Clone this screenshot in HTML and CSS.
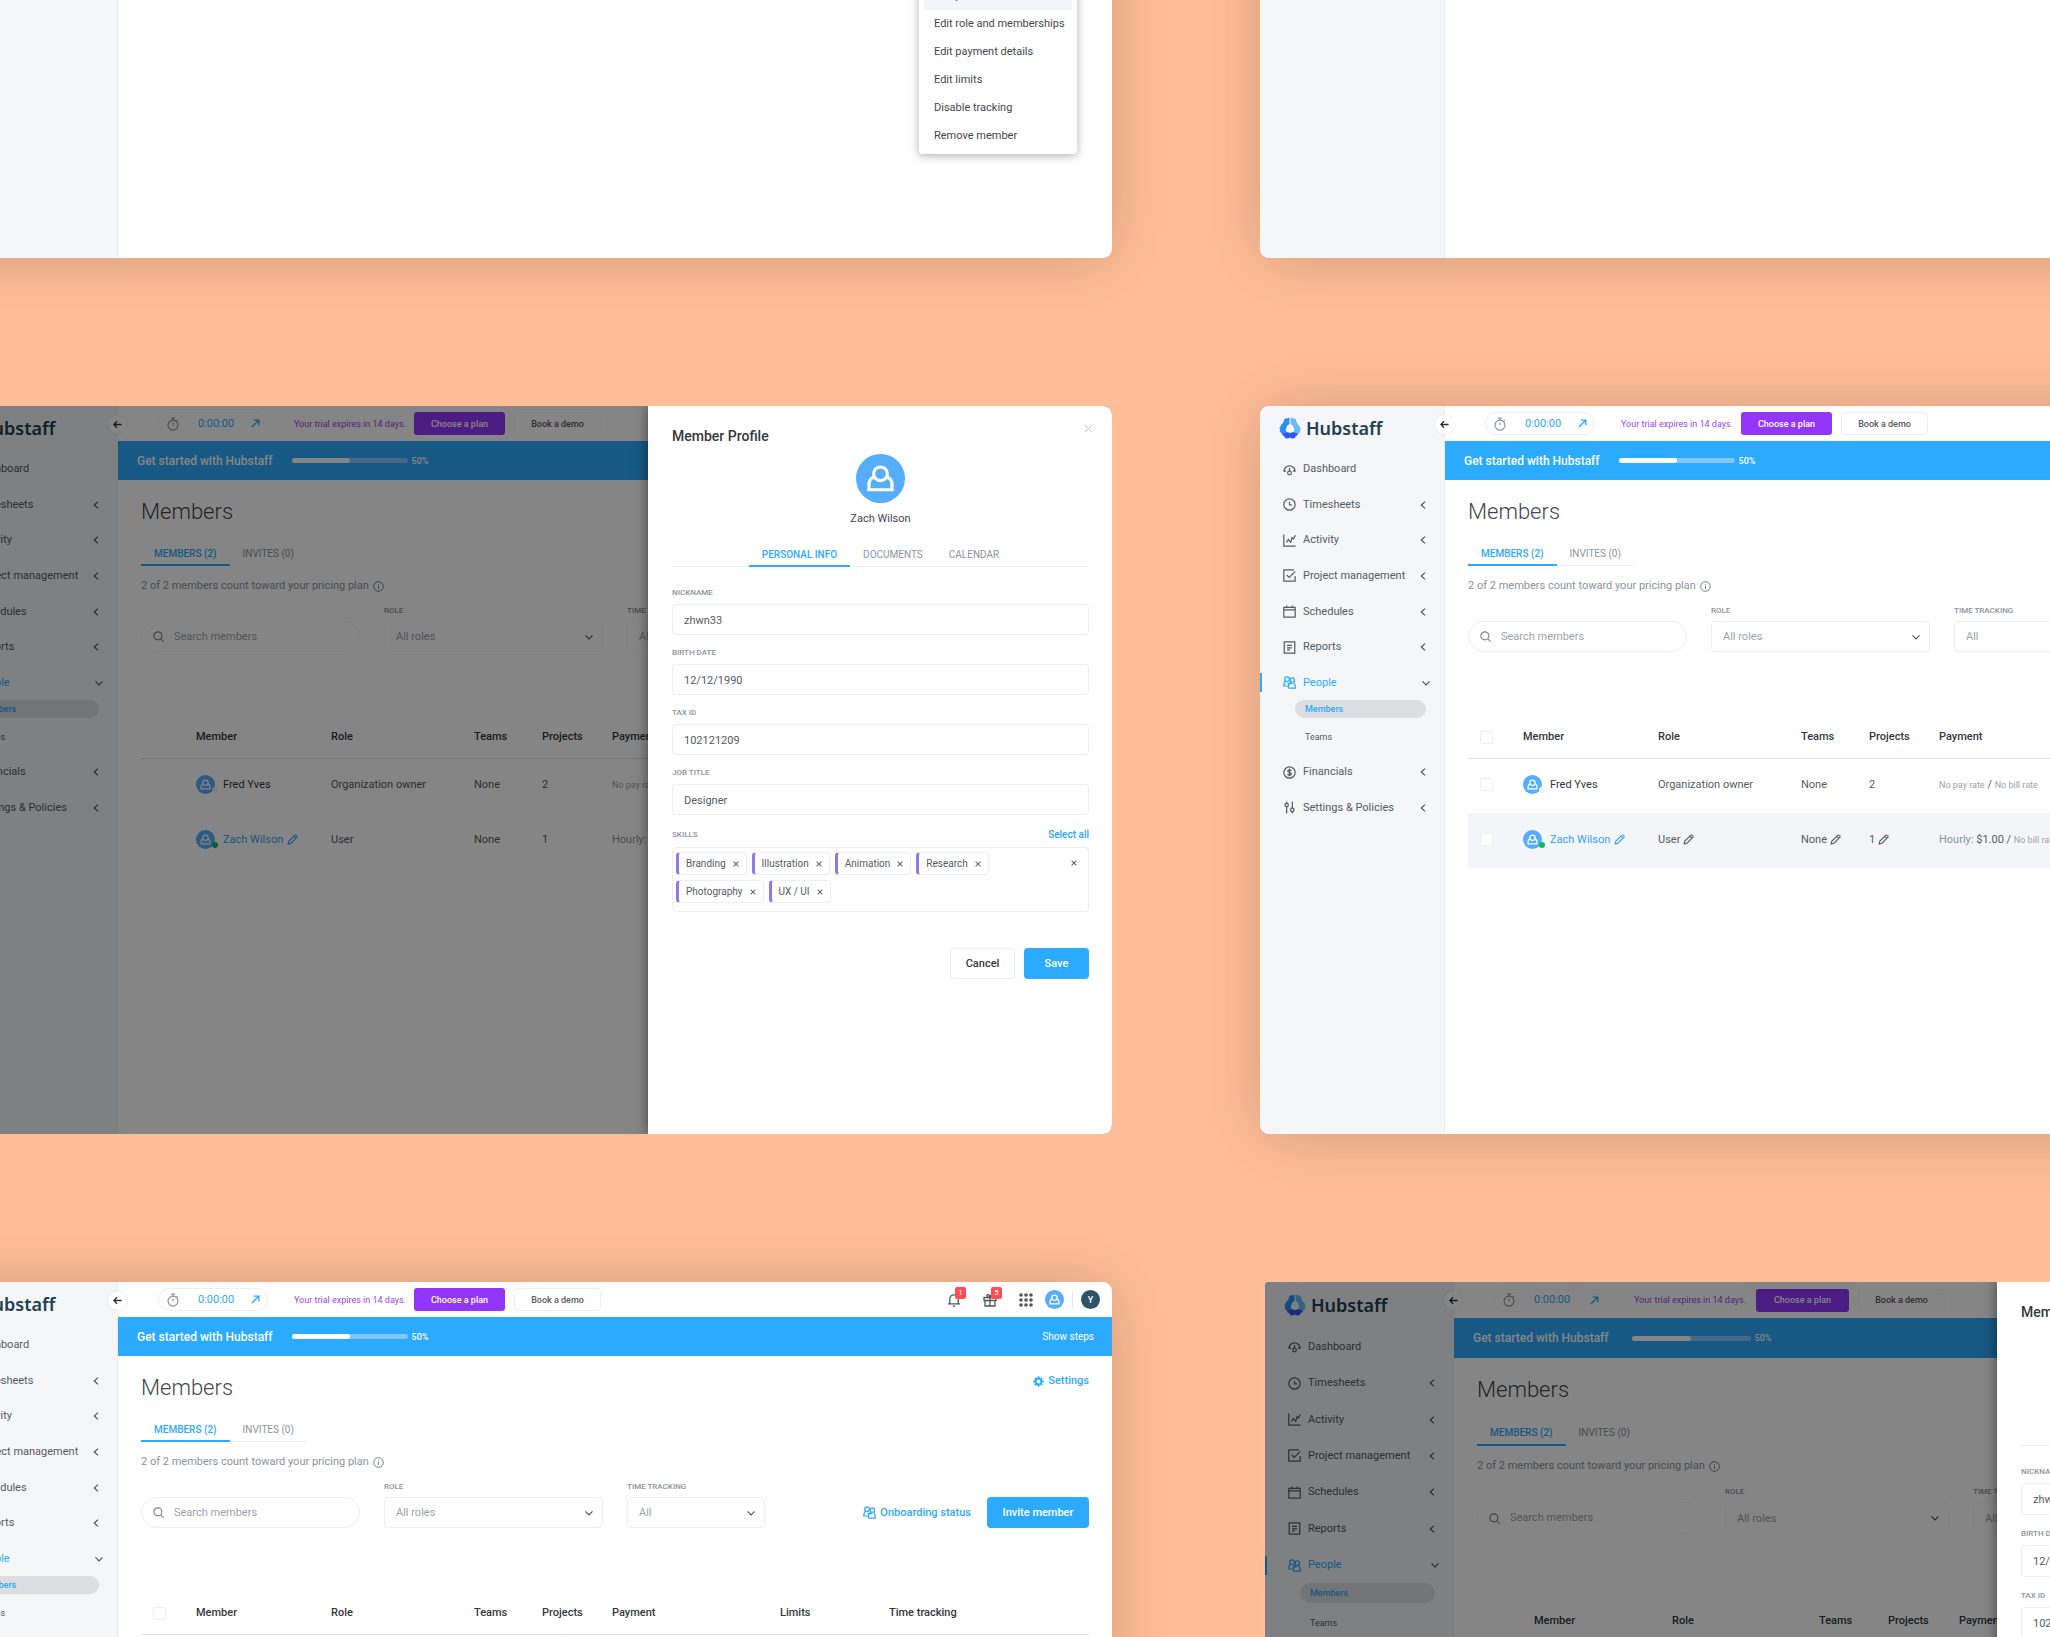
FILE: index.html
```html
<!DOCTYPE html>
<html lang="en">
<head>
<meta charset="utf-8">
<title>Hubstaff – Members</title>
<link rel="stylesheet" href="styles.css">
</head>
<body>
<svg class="sprite" aria-hidden="true">
  <symbol id="logo" viewBox="0 0 22 22">
    <path fill="#2a8cf8" d="M10.400 .6 7.400 1.700 6.900 1 4.600 3.200 5.200 4 3.400 6.800 2.600 7 1 10.200 .2 11.800 1.200 12.300 .7 14.600 3 17 7.500 15 6.800 12.500 8.200 8.600 10.400 7Z"/>
    <path fill="#62bcff" d="M11.600 .6 14.600 1.700 15.200 1 17.500 3.200 16.900 4.100 18.800 7.200 20.500 9.500 21.800 12.500 20.800 13.200 21.200 14.800 19 17 14.500 15 15.200 12.500 13.800 8.600 11.600 7Z"/>
    <path fill="#2f55f4" d="M3 16.800 7.600 14.900 11 15.900 14.400 14.900 19.100 16.800 18 18.800 17.200 18.600 15.500 21.200 12.800 21.600 11 20.600 9.200 21.600 6.400 21.200 4.900 18.700 4 18.900Z"/>
  </symbol>
  <symbol id="i-dash" viewBox="0 0 16 16"><path d="M1 10.500a7 7 0 1 1 14 0M1 10.500l2.800-.8M15 10.500l-2.800-.8M8 6v4"/><circle cx="8" cy="12.300" r="2.300"/></symbol>
  <symbol id="i-clock" viewBox="0 0 16 16"><circle cx="8" cy="8" r="7"/><path d="M8 4.500V8.500h3"/></symbol>
  <symbol id="i-chart" viewBox="0 0 16 16"><path d="M1 .5V15h14.500M4.300 10.500l2.200-3.600 3 3.300L11.200 4.500l1.600 1.600L15.300 1.500"/></symbol>
  <symbol id="i-check" viewBox="0 0 16 16"><path d="M15 8.500V15H1V1h12.500M4.500 7.200l3.200 3.200L15 3"/></symbol>
  <symbol id="i-cal" viewBox="0 0 16 16"><path d="M1 2.800h14V15H1zM1 6h14M4.500 .5v3M11.500 .5v3"/></symbol>
  <symbol id="i-report" viewBox="0 0 16 16"><path d="M1.500 1h13v14h-13zM5 5.500h6M5 8.500h6M5 11h3.500"/></symbol>
  <symbol id="i-people" viewBox="0 0 16 16"><circle cx="5" cy="4" r="2.900"/><circle cx="11.500" cy="5" r="2.700"/><path d="M3 6.500C1.300 7.500 1 9.500 1 12.300h5M6.500 14.800h8.700c0-4-.8-6-2.400-7.200M9.800 7.500c-2.300 1.200-3.300 3.500-3.300 7.300M5.500 9.300h5.800"/></symbol>
  <symbol id="i-dollar" viewBox="0 0 16 16"><circle cx="8" cy="8" r="7"/><path d="M10.300 6C10 5 9 4.800 8 4.800c-1.300 0-2.200.6-2.200 1.500C5.800 8.500 10.300 7.300 10.300 9.700c0 1-1 1.600-2.300 1.600-1.200 0-2.100-.5-2.400-1.400M8 3.300v9.400"/></symbol>
  <symbol id="i-sliders" viewBox="0 0 16 16"><path d="M4.500 7v8.500M4.500 .5v2.300M11.500 .5v8.300M11.500 13.200v2.300"/><circle cx="4.500" cy="5" r="2.100"/><circle cx="11.500" cy="11" r="2.100"/></symbol>
  <symbol id="i-left" viewBox="0 0 8 8"><path d="M6 .6 2.300 4l3.700 3.400"/></symbol>
  <symbol id="i-down" viewBox="0 0 8 8"><path d="M.5 2.300 4 5.800l3.500-3.500"/></symbol>
  <symbol id="i-back" viewBox="0 0 10 10"><path d="M9.500 5H1M4.500 1.500 1 5l3.500 3.500"/></symbol>
  <symbol id="i-watch" viewBox="0 0 14 16"><circle cx="7" cy="9.300" r="5.800"/><path d="M4.500 1h5M7 1v2.500M7 6.300v3.200M11.400 3.400l1.300 1.200"/></symbol>
  <symbol id="i-open" viewBox="0 0 10 10"><path d="M1 9 8.500 1.500M3 1.300h5.700V7"/></symbol>
  <symbol id="i-info" viewBox="0 0 12 12"><circle cx="6" cy="6" r="5.200"/><path d="M6 5.400v3.200M6 3.200v1"/></symbol>
  <symbol id="i-search" viewBox="0 0 12 12"><circle cx="5.300" cy="5.300" r="4.400"/><path d="M8.500 8.500l3 3"/></symbol>
  <symbol id="i-pencil" viewBox="0 0 12 12"><path d="M1.300 10.800 2 7.800 8.300 1.500a1.200 1.200 0 0 1 1.800 0l.6.600a1.200 1.200 0 0 1 0 1.700L4.300 10.100zM7.500 2.500l2.200 2.200"/></symbol>
  <symbol id="i-user" viewBox="0 0 20 20"><circle cx="10" cy="8.100" r="2.800"/><path d="M7.300 9.400C6 9.900 5.300 11 5.300 12.600v2h9.400v-2c0-1.600-.7-2.700-2-3.200"/></symbol>
  <symbol id="i-x" viewBox="0 0 10 10"><path d="M1 1l8 8M9 1 1 9"/></symbol>
  <symbol id="i-bell" viewBox="0 0 14 14"><path d="M1 10.800h12M2.800 10.500V6a4.200 4.200 0 0 1 8.400 0v4.500M5.800 13.200h2.400"/></symbol>
  <symbol id="i-gift" viewBox="0 0 14 14"><path d="M1 4.500h12v3H1zM2 7.500V13h10V7.500M7 4.500V13M7 4.300C5 4.300 3.500 3.500 4 2.200 4.700.8 6.700 2 7 4.300 7.300 2 9.300.8 10 2.200c.5 1.300-1 2.100-3 2.100"/></symbol>
  <symbol id="i-grid" viewBox="0 0 14 14"><g fill="currentColor" stroke="none"><circle cx="2" cy="2" r="1.800"/><circle cx="7" cy="2" r="1.800"/><circle cx="12" cy="2" r="1.800"/><circle cx="2" cy="7" r="1.800"/><circle cx="7" cy="7" r="1.800"/><circle cx="12" cy="7" r="1.800"/><circle cx="2" cy="12" r="1.800"/><circle cx="7" cy="12" r="1.800"/><circle cx="12" cy="12" r="1.800"/></g></symbol>
  <symbol id="i-gear" viewBox="0 0 12 12"><circle cx="6" cy="6" r="3.200" stroke-width="2.200"/><path stroke-width="2" d="M6 .3v2M6 9.700v2M.3 6h2M9.700 6h2M2 2l1.200 1.200M8.800 8.800 10 10M2 10l1.200-1.200M8.800 3.200 10 2"/></symbol>
</svg>

<div class="board">

  <!-- Row menu open -->
  <section class="window">
    <aside class="sidebar"></aside>
    <div class="main"></div>
    <menu class="menu">
      <li><button class="menu-item is-active">Edit profile</button></li>
      <li><button class="menu-item">Edit role and memberships</button></li>
      <li><button class="menu-item">Edit payment details</button></li>
      <li><button class="menu-item">Edit limits</button></li>
      <li><button class="menu-item">Disable tracking</button></li>
      <li><button class="menu-item">Remove member</button></li>
    </menu>
  </section>

  <section class="window">
    <aside class="sidebar"></aside>
    <div class="main"></div>
  </section>

  <!-- Member profile drawer -->
  <section class="window window-modal">
    <aside class="sidebar">
      <a class="brand" href="#"><svg class="logo"><use href="#logo"/></svg>Hubstaff</a>
      <nav>
        <div class="nav-group nav-main">
          <a class="nav-item" href="#"><svg class="icon"><use href="#i-dash"/></svg>Dashboard</a>
          <a class="nav-item" href="#"><svg class="icon"><use href="#i-clock"/></svg>Timesheets<svg class="caret"><use href="#i-left"/></svg></a>
          <a class="nav-item" href="#"><svg class="icon"><use href="#i-chart"/></svg>Activity<svg class="caret"><use href="#i-left"/></svg></a>
          <a class="nav-item" href="#"><svg class="icon"><use href="#i-check"/></svg>Project management<svg class="caret"><use href="#i-left"/></svg></a>
          <a class="nav-item" href="#"><svg class="icon"><use href="#i-cal"/></svg>Schedules<svg class="caret"><use href="#i-left"/></svg></a>
          <a class="nav-item" href="#"><svg class="icon"><use href="#i-report"/></svg>Reports<svg class="caret"><use href="#i-left"/></svg></a>
          <a class="nav-item is-active" href="#"><svg class="icon"><use href="#i-people"/></svg>People<svg class="caret"><use href="#i-down"/></svg></a>
        </div>
        <div class="subnav">
          <a class="sub-item is-active" href="#">Members</a>
          <a class="sub-item" href="#">Teams</a>
        </div>
        <div class="nav-group nav-more">
          <a class="nav-item" href="#"><svg class="icon"><use href="#i-dollar"/></svg>Financials<svg class="caret"><use href="#i-left"/></svg></a>
          <a class="nav-item" href="#"><svg class="icon"><use href="#i-sliders"/></svg>Settings &amp; Policies<svg class="caret"><use href="#i-left"/></svg></a>
        </div>
      </nav>
      <button class="collapse" aria-label="Collapse sidebar"><svg><use href="#i-back"/></svg></button>
    </aside>
    <div class="main">
      <header class="topbar">
        <div class="timer"><svg class="watch"><use href="#i-watch"/></svg><span>0:00:00</span><svg class="open"><use href="#i-open"/></svg></div>
        <span class="trial">Your trial expires in 14 days.</span>
        <button class="btn btn-plan">Choose a plan</button>
        <button class="btn btn-demo">Book a demo</button>
      </header>
      <div class="banner"><strong>Get started with Hubstaff</strong><span class="progress"><i style="width:50%"></i></span><span class="percent">50%</span></div>
      <div class="content">
        <h1>Members</h1>
        <div class="tabs"><a class="tab is-active" href="#">MEMBERS (2)</a><a class="tab" href="#">INVITES (0)</a></div>
        <p class="count">2 of 2 members count toward your pricing plan <svg class="info"><use href="#i-info"/></svg></p>
        <div class="filters">
          <div class="search"><svg><use href="#i-search"/></svg><input type="search" placeholder="Search members" aria-label="Search members"></div>
          <div class="filter"><label for="role-a">ROLE</label><div class="picker"><select id="role-a"><option>All roles</option></select><svg class="caret"><use href="#i-down"/></svg></div></div>
          <div class="filter filter-short"><label for="time-a">TIME TRACKING</label><div class="picker"><select id="time-a"><option>All</option></select><svg class="caret"><use href="#i-down"/></svg></div></div>
        </div>
        <table class="members">
          <colgroup><col class="c-check"><col class="c-member"><col class="c-role"><col class="c-teams"><col class="c-projects"><col class="c-pay"><col class="c-limits"><col></colgroup>
          <thead><tr><th></th><th>Member</th><th>Role</th><th>Teams</th><th>Projects</th><th>Payment</th><th></th><th></th></tr></thead>
          <tbody>
            <tr><td></td><td><div class="person"><span class="avatar"><svg><use href="#i-user"/></svg><i class="dot"></i></span>Fred Yves</div></td><td>Organization owner</td><td>None</td><td>2</td><td><small>No pay rate</small></td><td></td><td></td></tr>
            <tr><td></td><td><div class="person"><span class="avatar"><svg><use href="#i-user"/></svg><i class="dot is-on"></i></span><a href="#">Zach Wilson</a><svg class="pencil is-link"><use href="#i-pencil"/></svg></div></td><td>User</td><td>None</td><td>1</td><td><span class="muted">Hourly:</span></td><td></td><td></td></tr>
          </tbody>
        </table>
      </div>
    </div>
    <div class="shade"></div>
    <form class="drawer">
      <div class="drawer-head"><h2>Member Profile</h2><button type="button" class="close" aria-label="Close"><svg><use href="#i-x"/></svg></button></div>
      <div class="profile"><span class="avatar avatar-big"><svg><use href="#i-user"/></svg></span><span class="profile-name">Zach Wilson</span></div>
      <div class="drawer-tabs"><a class="tab is-active" href="#">PERSONAL INFO</a><a class="tab" href="#">DOCUMENTS</a><a class="tab" href="#">CALENDAR</a></div>
      <div class="field"><label for="nick-a">NICKNAME</label><input id="nick-a" value="zhwn33"></div>
      <div class="field"><label for="birth-a">BIRTH DATE</label><input id="birth-a" value="12/12/1990"></div>
      <div class="field"><label for="tax-a">TAX ID</label><input id="tax-a" value="102121209"></div>
      <div class="field"><label for="job-a">JOB TITLE</label><input id="job-a" value="Designer"></div>
      <div class="skills-head"><span>SKILLS</span><a href="#">Select all</a></div>
      <div class="skills">
        <div class="chips">
          <span class="chip">Branding<button type="button" aria-label="Remove Branding"><svg><use href="#i-x"/></svg></button></span>
          <span class="chip">Illustration<button type="button" aria-label="Remove Illustration"><svg><use href="#i-x"/></svg></button></span>
          <span class="chip">Animation<button type="button" aria-label="Remove Animation"><svg><use href="#i-x"/></svg></button></span>
          <span class="chip">Research<button type="button" aria-label="Remove Research"><svg><use href="#i-x"/></svg></button></span>
          <span class="chip">Photography<button type="button" aria-label="Remove Photography"><svg><use href="#i-x"/></svg></button></span>
          <span class="chip">UX / UI<button type="button" aria-label="Remove UX / UI"><svg><use href="#i-x"/></svg></button></span>
        </div>
        <button type="button" class="clear" aria-label="Clear skills"><svg><use href="#i-x"/></svg></button>
      </div>
      <div class="actions"><button type="button" class="btn btn-cancel">Cancel</button><button type="button" class="btn btn-save">Save</button></div>
    </form>
  </section>

  <!-- Members list with a hovered row -->
  <section class="window">
    <aside class="sidebar">
      <a class="brand" href="#"><svg class="logo"><use href="#logo"/></svg>Hubstaff</a>
      <nav>
        <div class="nav-group nav-main">
          <a class="nav-item" href="#"><svg class="icon"><use href="#i-dash"/></svg>Dashboard</a>
          <a class="nav-item" href="#"><svg class="icon"><use href="#i-clock"/></svg>Timesheets<svg class="caret"><use href="#i-left"/></svg></a>
          <a class="nav-item" href="#"><svg class="icon"><use href="#i-chart"/></svg>Activity<svg class="caret"><use href="#i-left"/></svg></a>
          <a class="nav-item" href="#"><svg class="icon"><use href="#i-check"/></svg>Project management<svg class="caret"><use href="#i-left"/></svg></a>
          <a class="nav-item" href="#"><svg class="icon"><use href="#i-cal"/></svg>Schedules<svg class="caret"><use href="#i-left"/></svg></a>
          <a class="nav-item" href="#"><svg class="icon"><use href="#i-report"/></svg>Reports<svg class="caret"><use href="#i-left"/></svg></a>
          <a class="nav-item is-active" href="#"><svg class="icon"><use href="#i-people"/></svg>People<svg class="caret"><use href="#i-down"/></svg></a>
        </div>
        <div class="subnav">
          <a class="sub-item is-active" href="#">Members</a>
          <a class="sub-item" href="#">Teams</a>
        </div>
        <div class="nav-group nav-more">
          <a class="nav-item" href="#"><svg class="icon"><use href="#i-dollar"/></svg>Financials<svg class="caret"><use href="#i-left"/></svg></a>
          <a class="nav-item" href="#"><svg class="icon"><use href="#i-sliders"/></svg>Settings &amp; Policies<svg class="caret"><use href="#i-left"/></svg></a>
        </div>
      </nav>
      <button class="collapse" aria-label="Collapse sidebar"><svg><use href="#i-back"/></svg></button>
    </aside>
    <div class="main">
      <header class="topbar">
        <div class="timer"><svg class="watch"><use href="#i-watch"/></svg><span>0:00:00</span><svg class="open"><use href="#i-open"/></svg></div>
        <span class="trial">Your trial expires in 14 days.</span>
        <button class="btn btn-plan">Choose a plan</button>
        <button class="btn btn-demo">Book a demo</button>
      </header>
      <div class="banner"><strong>Get started with Hubstaff</strong><span class="progress"><i style="width:50%"></i></span><span class="percent">50%</span></div>
      <div class="content">
        <h1>Members</h1>
        <div class="tabs"><a class="tab is-active" href="#">MEMBERS (2)</a><a class="tab" href="#">INVITES (0)</a></div>
        <p class="count">2 of 2 members count toward your pricing plan <svg class="info"><use href="#i-info"/></svg></p>
        <div class="filters">
          <div class="search"><svg><use href="#i-search"/></svg><input type="search" placeholder="Search members" aria-label="Search members"></div>
          <div class="filter"><label for="role-b">ROLE</label><div class="picker"><select id="role-b"><option>All roles</option></select><svg class="caret"><use href="#i-down"/></svg></div></div>
          <div class="filter filter-short"><label for="time-b">TIME TRACKING</label><div class="picker"><select id="time-b"><option>All</option></select><svg class="caret"><use href="#i-down"/></svg></div></div>
        </div>
        <table class="members">
          <colgroup><col class="c-check"><col class="c-member"><col class="c-role"><col class="c-teams"><col class="c-projects"><col class="c-pay"><col class="c-limits"><col></colgroup>
          <thead><tr><th><input type="checkbox" aria-label="Select all members"></th><th>Member</th><th>Role</th><th>Teams</th><th>Projects</th><th>Payment</th><th></th><th></th></tr></thead>
          <tbody>
            <tr><td><input type="checkbox" aria-label="Select Fred Yves"></td><td><div class="person"><span class="avatar"><svg><use href="#i-user"/></svg><i class="dot"></i></span>Fred Yves</div></td><td>Organization owner</td><td>None</td><td>2</td><td><small>No pay rate</small> / <small>No bill rate</small></td><td></td><td></td></tr>
            <tr class="is-hovered"><td><input type="checkbox" aria-label="Select Zach Wilson"></td><td><div class="person"><span class="avatar"><svg><use href="#i-user"/></svg><i class="dot is-on"></i></span><a href="#">Zach Wilson</a><svg class="pencil is-link"><use href="#i-pencil"/></svg></div></td><td>User <svg class="pencil"><use href="#i-pencil"/></svg></td><td>None <svg class="pencil"><use href="#i-pencil"/></svg></td><td>1 <svg class="pencil"><use href="#i-pencil"/></svg></td><td><span class="muted">Hourly:</span> $1.00 / <small>No bill rate</small></td><td></td><td></td></tr>
          </tbody>
        </table>
      </div>
    </div>
  </section>

  <!-- Members list -->
  <section class="window">
    <aside class="sidebar">
      <a class="brand" href="#"><svg class="logo"><use href="#logo"/></svg>Hubstaff</a>
      <nav>
        <div class="nav-group nav-main">
          <a class="nav-item" href="#"><svg class="icon"><use href="#i-dash"/></svg>Dashboard</a>
          <a class="nav-item" href="#"><svg class="icon"><use href="#i-clock"/></svg>Timesheets<svg class="caret"><use href="#i-left"/></svg></a>
          <a class="nav-item" href="#"><svg class="icon"><use href="#i-chart"/></svg>Activity<svg class="caret"><use href="#i-left"/></svg></a>
          <a class="nav-item" href="#"><svg class="icon"><use href="#i-check"/></svg>Project management<svg class="caret"><use href="#i-left"/></svg></a>
          <a class="nav-item" href="#"><svg class="icon"><use href="#i-cal"/></svg>Schedules<svg class="caret"><use href="#i-left"/></svg></a>
          <a class="nav-item" href="#"><svg class="icon"><use href="#i-report"/></svg>Reports<svg class="caret"><use href="#i-left"/></svg></a>
          <a class="nav-item is-active" href="#"><svg class="icon"><use href="#i-people"/></svg>People<svg class="caret"><use href="#i-down"/></svg></a>
        </div>
        <div class="subnav">
          <a class="sub-item is-active" href="#">Members</a>
          <a class="sub-item" href="#">Teams</a>
        </div>
      </nav>
      <button class="collapse" aria-label="Collapse sidebar"><svg><use href="#i-back"/></svg></button>
    </aside>
    <div class="main">
      <header class="topbar">
        <div class="timer"><svg class="watch"><use href="#i-watch"/></svg><span>0:00:00</span><svg class="open"><use href="#i-open"/></svg></div>
        <span class="trial">Your trial expires in 14 days.</span>
        <button class="btn btn-plan">Choose a plan</button>
        <button class="btn btn-demo">Book a demo</button>
        <div class="tools">
          <button class="tool" aria-label="Notifications"><svg><use href="#i-bell"/></svg><span class="badge">1</span></button>
          <button class="tool" aria-label="What is new"><svg><use href="#i-gift"/></svg><span class="badge">5</span></button>
          <button class="tool" aria-label="Apps"><svg><use href="#i-grid"/></svg></button>
          <span class="avatar"><svg><use href="#i-user"/></svg></span>
          <span class="rule"></span>
          <span class="avatar avatar-org">Y</span>
        </div>
      </header>
      <div class="banner"><strong>Get started with Hubstaff</strong><span class="progress"><i style="width:50%"></i></span><span class="percent">50%</span><a class="steps" href="#">Show steps</a></div>
      <div class="content">
        <div class="title-row"><h1>Members</h1><a class="text-link" href="#"><svg class="gear"><use href="#i-gear"/></svg>Settings</a></div>
        <div class="tabs"><a class="tab is-active" href="#">MEMBERS (2)</a><a class="tab" href="#">INVITES (0)</a></div>
        <p class="count">2 of 2 members count toward your pricing plan <svg class="info"><use href="#i-info"/></svg></p>
        <div class="filters">
          <div class="search"><svg><use href="#i-search"/></svg><input type="search" placeholder="Search members" aria-label="Search members"></div>
          <div class="filter"><label for="role-c">ROLE</label><div class="picker"><select id="role-c"><option>All roles</option></select><svg class="caret"><use href="#i-down"/></svg></div></div>
          <div class="filter filter-short"><label for="time-c">TIME TRACKING</label><div class="picker"><select id="time-c"><option>All</option></select><svg class="caret"><use href="#i-down"/></svg></div></div>
          <div class="filter-actions"><a class="text-link" href="#"><svg class="icon"><use href="#i-people"/></svg>Onboarding status</a><button class="btn btn-invite">Invite member</button></div>
        </div>
        <table class="members">
          <colgroup><col class="c-check"><col class="c-member"><col class="c-role"><col class="c-teams"><col class="c-projects"><col class="c-pay"><col class="c-limits"><col></colgroup>
          <thead><tr><th><input type="checkbox" aria-label="Select all members"></th><th>Member</th><th>Role</th><th>Teams</th><th>Projects</th><th>Payment</th><th>Limits</th><th>Time tracking</th></tr></thead>
        </table>
      </div>
    </div>
  </section>

  <!-- Member profile drawer, larger window -->
  <section class="window window-modal window-large">
    <aside class="sidebar">
      <a class="brand" href="#"><svg class="logo"><use href="#logo"/></svg>Hubstaff</a>
      <nav>
        <div class="nav-group nav-main">
          <a class="nav-item" href="#"><svg class="icon"><use href="#i-dash"/></svg>Dashboard</a>
          <a class="nav-item" href="#"><svg class="icon"><use href="#i-clock"/></svg>Timesheets<svg class="caret"><use href="#i-left"/></svg></a>
          <a class="nav-item" href="#"><svg class="icon"><use href="#i-chart"/></svg>Activity<svg class="caret"><use href="#i-left"/></svg></a>
          <a class="nav-item" href="#"><svg class="icon"><use href="#i-check"/></svg>Project management<svg class="caret"><use href="#i-left"/></svg></a>
          <a class="nav-item" href="#"><svg class="icon"><use href="#i-cal"/></svg>Schedules<svg class="caret"><use href="#i-left"/></svg></a>
          <a class="nav-item" href="#"><svg class="icon"><use href="#i-report"/></svg>Reports<svg class="caret"><use href="#i-left"/></svg></a>
          <a class="nav-item is-active" href="#"><svg class="icon"><use href="#i-people"/></svg>People<svg class="caret"><use href="#i-down"/></svg></a>
        </div>
        <div class="subnav">
          <a class="sub-item is-active" href="#">Members</a>
          <a class="sub-item" href="#">Teams</a>
        </div>
      </nav>
      <button class="collapse" aria-label="Collapse sidebar"><svg><use href="#i-back"/></svg></button>
    </aside>
    <div class="main">
      <header class="topbar">
        <div class="timer"><svg class="watch"><use href="#i-watch"/></svg><span>0:00:00</span><svg class="open"><use href="#i-open"/></svg></div>
        <span class="trial">Your trial expires in 14 days.</span>
        <button class="btn btn-plan">Choose a plan</button>
        <button class="btn btn-demo">Book a demo</button>
      </header>
      <div class="banner"><strong>Get started with Hubstaff</strong><span class="progress"><i style="width:50%"></i></span><span class="percent">50%</span></div>
      <div class="content">
        <h1>Members</h1>
        <div class="tabs"><a class="tab is-active" href="#">MEMBERS (2)</a><a class="tab" href="#">INVITES (0)</a></div>
        <p class="count">2 of 2 members count toward your pricing plan <svg class="info"><use href="#i-info"/></svg></p>
        <div class="filters">
          <div class="search"><svg><use href="#i-search"/></svg><input type="search" placeholder="Search members" aria-label="Search members"></div>
          <div class="filter"><label for="role-d">ROLE</label><div class="picker"><select id="role-d"><option>All roles</option></select><svg class="caret"><use href="#i-down"/></svg></div></div>
          <div class="filter filter-short"><label for="time-d">TIME TRACKING</label><div class="picker"><select id="time-d"><option>All</option></select><svg class="caret"><use href="#i-down"/></svg></div></div>
        </div>
        <table class="members">
          <colgroup><col class="c-check"><col class="c-member"><col class="c-role"><col class="c-teams"><col class="c-projects"><col class="c-pay"><col class="c-limits"><col></colgroup>
          <thead><tr><th></th><th>Member</th><th>Role</th><th>Teams</th><th>Projects</th><th>Payment</th><th></th><th></th></tr></thead>
        </table>
      </div>
    </div>
    <div class="shade"></div>
    <form class="drawer">
      <div class="drawer-head"><h2>Member Profile</h2></div>
      <div class="profile"></div>
      <div class="drawer-tabs"></div>
      <div class="field"><label for="nick-b">NICKNAME</label><input id="nick-b" value="zhwn33"></div>
      <div class="field"><label for="birth-b">BIRTH DATE</label><input id="birth-b" value="12/12/1990"></div>
      <div class="field"><label for="tax-b">TAX ID</label><input id="tax-b" value="102121209"></div>
    </form>
  </section>

</div>
</body>
</html>
```
FILE: styles.css
```css
* { box-sizing: border-box; }

html, body { height: 100%; margin: 0; overflow: hidden; }

body {
  background: #ffbe98;
  color: #565b62;
  font: 11px/16px Roboto, "Liberation Sans", sans-serif;
}

a { color: inherit; text-decoration: none; }
button, input, select { font: inherit; color: inherit; margin: 0; }
button { padding: 0; border: 0; background: none; }
svg { display: block; flex: none; fill: none; stroke: currentColor; }
.sprite { position: absolute; width: 0; height: 0; }
h1, h2, p, menu { margin: 0; padding: 0; }

/* Board: a sheet of windows that runs past the edges of the page */
.board {
  display: grid;
  grid-template-columns: 1fr 1fr;
  gap: 148px;
  width: calc(100% + 456px);
  margin: -470px 0 0 -67px;
}

.window {
  --side: 185px;
  --brand: 45px;
  --nav: 249px;
  --pill: 18px;
  --topbar: 35px;
  --banner: 39px;
  --timer: 110px;
  --trial-gap: 26px;
  --plan-gap: 8px;
  --plan: 91px;
  --progress-gap: 19px;
  --progress: 116px;
  --tabs-gap: 15px;
  --tabs: 24px;
  --filters-gap: 12px;
  --control: 31px;
  --select: 219px;
  --table-gap: 65px;
  --drawer: 464px;
  --field-gap: 13px;
  --blue: #2caafe;
  --line: #eceef1;
  position: relative;
  display: flex;
  min-height: 728px;
  border-radius: 9px;
  background: #fff;
  box-shadow: 0 2px 64px rgba(0, 0, 0, .18);
  overflow: hidden;
}
.window-modal { box-shadow: none; }
.window-modal .main { --line: #f7f8f9; }
.window-large {
  --side: 189px;
  --brand: 46px;
  --nav: 255px;
  --pill: 20px;
  --topbar: 36px;
  --banner: 40px;
  --timer: 113px;
  --trial-gap: 27px;
  --plan-gap: 10px;
  --plan: 93px;
  --progress-gap: 23px;
  --progress: 119px;
  --tabs-gap: 16px;
  --tabs: 25px;
  --filters-gap: 13px;
  --control: 32px;
  --select: 224px;
  --table-gap: 67px;
  --drawer: 471px;
  --field-gap: 14px;
  margin: 0 -29px 0 5px;
  border-radius: 3px;
}

/* Sidebar */
.sidebar {
  flex: none;
  position: relative;
  width: var(--side);
  background: #f4f6f8;
  border-right: 1px solid #eaedf0;
}
.brand {
  display: flex;
  align-items: center;
  gap: 5px;
  height: var(--brand);
  padding: 0 0 1px 19px;
  color: #22404f;
  font: 600 18px/22px "Noto Sans", sans-serif;
}
.logo { width: 22px; height: 22px; stroke: none; }
.nav-group { display: grid; grid-auto-rows: 1fr; }
.nav-main { height: var(--nav); }
.nav-more { height: 71px; }
.nav-item {
  position: relative;
  display: flex;
  align-items: center;
  gap: 8px;
  padding: 1px 17px 0 23px;
}
.nav-item.is-active { padding-right: 14px; color: var(--blue); }
.nav-item.is-active::before {
  content: "";
  position: absolute;
  left: 0;
  width: 2px;
  height: 19px;
  background: var(--blue);
}
.icon { width: 13px; height: 13px; stroke-width: 1.500; }
.nav-item .icon { margin-right: -1px; }
.caret { width: 8px; height: 8px; margin-left: auto; stroke-width: 1.200; color: #50555c; }
.subnav {
  display: grid;
  gap: 10px;
  padding: 0 18px 8px 35px;
}
.sub-item {
  height: var(--pill);
  padding-left: 10px;
  border-radius: 10px;
  font-size: 9px;
  line-height: var(--pill);
}
.sub-item.is-active { background: #dcdee2; color: var(--blue); font-weight: 500; }
.collapse {
  position: absolute;
  z-index: 1;
  top: 9px;
  right: -10px;
  display: grid;
  place-items: center;
  width: 19px;
  height: 19px;
  border-radius: 50%;
  background: #fff;
  box-shadow: 0 0 2px rgba(0, 0, 0, .15);
  color: #2b3036;
}
.collapse svg { width: 9px; height: 9px; stroke-width: 1.500; }

/* Top bar */
.main { flex: 1; min-width: 0; }
.topbar {
  display: flex;
  align-items: center;
  height: var(--topbar);
  padding-left: 40px;
  font-size: 9px;
}
.timer {
  display: flex;
  align-items: center;
  width: var(--timer);
  height: 23px;
  padding: 0 7px 0 8px;
  border: 1px solid var(--line);
  border-radius: 12px;
  color: var(--blue);
  font-size: 11px;
}
.timer span { margin: 0 auto 0 19px; }
.watch { width: 12px; height: 14px; stroke-width: 1.300; color: #8a8f96; }
.open { width: 9px; height: 9px; stroke-width: 1.500; }
.trial { margin: 0 var(--plan-gap) 0 var(--trial-gap); color: #a044f2; }
.btn {
  flex: none;
  border-radius: 4px;
  font-weight: 500;
  text-align: center;
}
.btn-plan { width: var(--plan); height: 23px; border-radius: 3px; background: #9136fa; color: #fff; }
.btn-demo { width: 87px; height: 23px; margin-left: 9px; border: 1px solid var(--line); }
.tools {
  display: flex;
  align-items: center;
  margin-left: auto;
  padding-right: 12px;
}
.tool { position: relative; width: 14px; margin-right: 22px; color: #50555c; }
.tool svg { width: 14px; height: 14px; stroke-width: 1.300; }
.tool:nth-child(3) { margin-right: 12px; }
.badge {
  position: absolute;
  top: -6px;
  left: 8px;
  width: 11px;
  height: 12px;
  border-radius: 2px;
  background: #ff4d55;
  color: #fff;
  font-size: 8px;
  line-height: 12px;
}
.rule { width: 1px; height: 17px; margin: 0 8px; background: #e4e6ea; }

.avatar {
  position: relative;
  flex: none;
  display: grid;
  place-items: center;
  width: 19px;
  height: 19px;
  border-radius: 50%;
  background: #55adfb;
  color: #fff;
}
.avatar svg { width: 19px; height: 19px; stroke-width: 1.300; }
.avatar-big, .avatar-big svg { width: 49px; height: 49px; }
.avatar-org { background: #2b5468; font-weight: 500; }
.dot {
  position: absolute;
  right: -3px;
  bottom: 1px;
  width: 6px;
  height: 6px;
  border-radius: 50%;
  background: #eef0f2;
}
.dot.is-on { background: #0cbd66; }

/* Banner */
.banner {
  display: flex;
  align-items: center;
  height: var(--banner);
  padding: 0 18px 0 19px;
  background: var(--blue);
  color: #fff;
  font-size: 9px;
}
.banner strong { font-size: 12px; font-weight: 500; }
.progress { width: var(--progress); height: 5px; margin: 0 4px 0 var(--progress-gap); border-radius: 3px; background: #86c5ff; }
.progress i { display: block; height: 5px; border-radius: 3px; background: #fff; }
.percent { font-weight: 500; }
.steps { margin-left: auto; font-size: 10px; }

/* Page content */
.content { padding: 17px 23px 0; }
.title-row { display: flex; justify-content: space-between; align-items: flex-start; }
h1 { color: #43484e; font-size: 22px; font-weight: 300; line-height: 30px; }
.text-link { display: flex; align-items: center; gap: 4px; color: var(--blue); font-weight: 500; }
.gear { width: 11px; height: 11px; }
.tabs { display: flex; margin-top: var(--tabs-gap); }
.tab {
  height: var(--tabs);
  padding: 0 13px;
  border-bottom: 1px solid var(--line);
  color: #8d939b;
  font-size: 10px;
  line-height: 24px;
}
.tab.is-active { border-bottom: 2px solid var(--blue); color: var(--blue); font-weight: 500; }
.count { display: flex; align-items: center; gap: 4px; margin-top: 12px; color: #8d939b; }
.info { width: 11px; height: 11px; color: #6a7078; }
.filters { display: flex; align-items: flex-end; gap: 24px; margin-top: var(--filters-gap); }
.search {
  display: flex;
  align-items: center;
  gap: 10px;
  width: var(--select);
  height: var(--control);
  padding: 0 11px;
  border: 1px solid var(--line);
  border-radius: 16px;
  color: #7d838b;
}
.search svg { width: 11px; height: 11px; stroke-width: 1.200; }
.search input { flex: 1; min-width: 0; padding: 0; border: 0; background: none; }
.search input::placeholder { color: #9da2a9; opacity: 1; }
.filter { width: var(--select); }
.filter-short { width: 138px; }
.filter label, .field label, .skills-head span {
  display: block;
  color: #8d939b;
  font-size: 8px;
  font-weight: 500;
  line-height: 10px;
}
.picker { position: relative; margin-top: 5px; }
.picker select {
  display: block;
  width: 100%;
  height: var(--control);
  padding: 1px 11px 0;
  border: 1px solid var(--line);
  border-radius: 4px;
  background: #fff;
  color: #9da2a9;
  appearance: none;
}
.picker .caret { position: absolute; top: 12px; right: 10px; }
.filter-actions { display: flex; align-items: center; gap: 16px; margin-left: auto; }
.btn-invite { width: 102px; height: 31px; background: var(--blue); color: #fff; }

/* Members table */
.members {
  width: 100%;
  margin-top: var(--table-gap);
  border-collapse: collapse;
  table-layout: fixed;
}
.c-check { width: 55px; }
.c-member { width: 135px; }
.c-role { width: 143px; }
.c-teams { width: 68px; }
.c-projects { width: 70px; }
.c-pay { width: 168px; }
.c-limits { width: 109px; }
.window-large .c-check { width: 57px; }
.window-large .c-member { width: 138px; }
.window-large .c-role { width: 147px; }
.window-large .c-teams { width: 69px; }
.window-large .c-projects { width: 71px; }
.members th { height: 41px; padding: 0; border-bottom: 1px solid #dfe2e6; color: #33383e; font-weight: 500; text-align: left; }
.members td { height: 55px; padding: 0 0 2px; white-space: nowrap; }
.members input {
  display: block;
  width: 13px;
  height: 13px;
  margin-left: 12px;
  border: 1px solid #eef0f2;
  border-radius: 2px;
  background: #fff;
  appearance: none;
}
.members small { color: #9da2a9; font-size: 9px; }
.muted { color: #8d939b; }
.is-hovered { background: #f3f5f8; }
.person { display: flex; align-items: center; gap: 8px; color: #33383e; }
.person a { color: #2fa3f2; }
.pencil { display: inline-block; width: 11px; height: 11px; vertical-align: -2px; stroke-width: 1.200; }
.pencil.is-link { margin-left: -4px; color: #2fa3f2; }

/* Row menu */
.menu {
  position: absolute;
  right: 35px;
  bottom: 104px;
  width: 158px;
  padding: 4px 5px;
  border-radius: 4px;
  background: #fff;
  box-shadow: 0 2px 10px rgba(0, 0, 0, .3);
  list-style: none;
}
.menu-item { display: block; width: 100%; height: 28px; padding-left: 10px; color: #43484e; text-align: left; }
.menu-item.is-active { background: #f2f6fb; }

/* Drawer */
.shade { position: absolute; z-index: 2; inset: 0; background: rgba(0, 0, 0, .48); }
.drawer {
  position: absolute;
  z-index: 3;
  inset: 0 0 0 auto;
  width: var(--drawer);
  padding: 15px 23px 0 24px;
  background: #fff;
  box-shadow: 0 0 12px rgba(0, 0, 0, .5);
}
.drawer-head { display: flex; justify-content: space-between; align-items: flex-start; height: 33px; margin-right: -4px; }
h2 { color: #33383e; font-size: 14px; font-weight: 500; line-height: 30px; }
.close { margin-top: 3px; color: #b9bdc3; }
.close svg { width: 9px; height: 9px; }
.profile { display: flex; flex-direction: column; align-items: center; gap: 8px; height: 89px; }
.profile-name { color: #43484e; }
.drawer-tabs { display: flex; justify-content: center; height: 24px; margin-bottom: 21px; border-bottom: 1px solid var(--line); }
.drawer-tabs .tab { border-bottom-color: transparent; }
.drawer-tabs .tab.is-active { border-bottom-color: var(--blue); }
.window-large .profile { height: 92px; }
.field { margin-bottom: var(--field-gap); }
.field input {
  display: block;
  width: 100%;
  height: var(--control);
  margin-top: 6px;
  padding: 1px 11px 0;
  border: 1px solid var(--line);
  border-radius: 4px;
}
.skills-head { display: flex; justify-content: space-between; align-items: center; }
.skills-head a { color: #2fa3f2; font-size: 10px; font-weight: 500; line-height: 14px; }
.skills {
  display: flex;
  height: 65px;
  margin-top: 5px;
  padding: 4px 11px 0 3px;
  border: 1px solid var(--line);
  border-radius: 4px;
}
.chips { flex: 1; display: flex; flex-wrap: wrap; align-content: flex-start; gap: 5px; padding-right: 60px; }
.chip {
  display: flex;
  align-items: center;
  gap: 7px;
  height: 23px;
  padding: 0 7px;
  border: 1px solid var(--line);
  border-left: 3px solid #8f78ea;
  border-radius: 4px;
  font-size: 10px;
}
.chip svg, .clear svg { width: 6px; height: 6px; stroke-width: 2; color: #6a7078; }
.clear { align-self: flex-start; margin-top: 8px; }
.actions { display: flex; justify-content: flex-end; gap: 9px; margin-top: 36px; }
.btn-cancel, .btn-save { width: 65px; height: 31px; }
.btn-cancel { border: 1px solid var(--line); color: #33383e; }
.btn-save { background: var(--blue); color: #fff; }
```
